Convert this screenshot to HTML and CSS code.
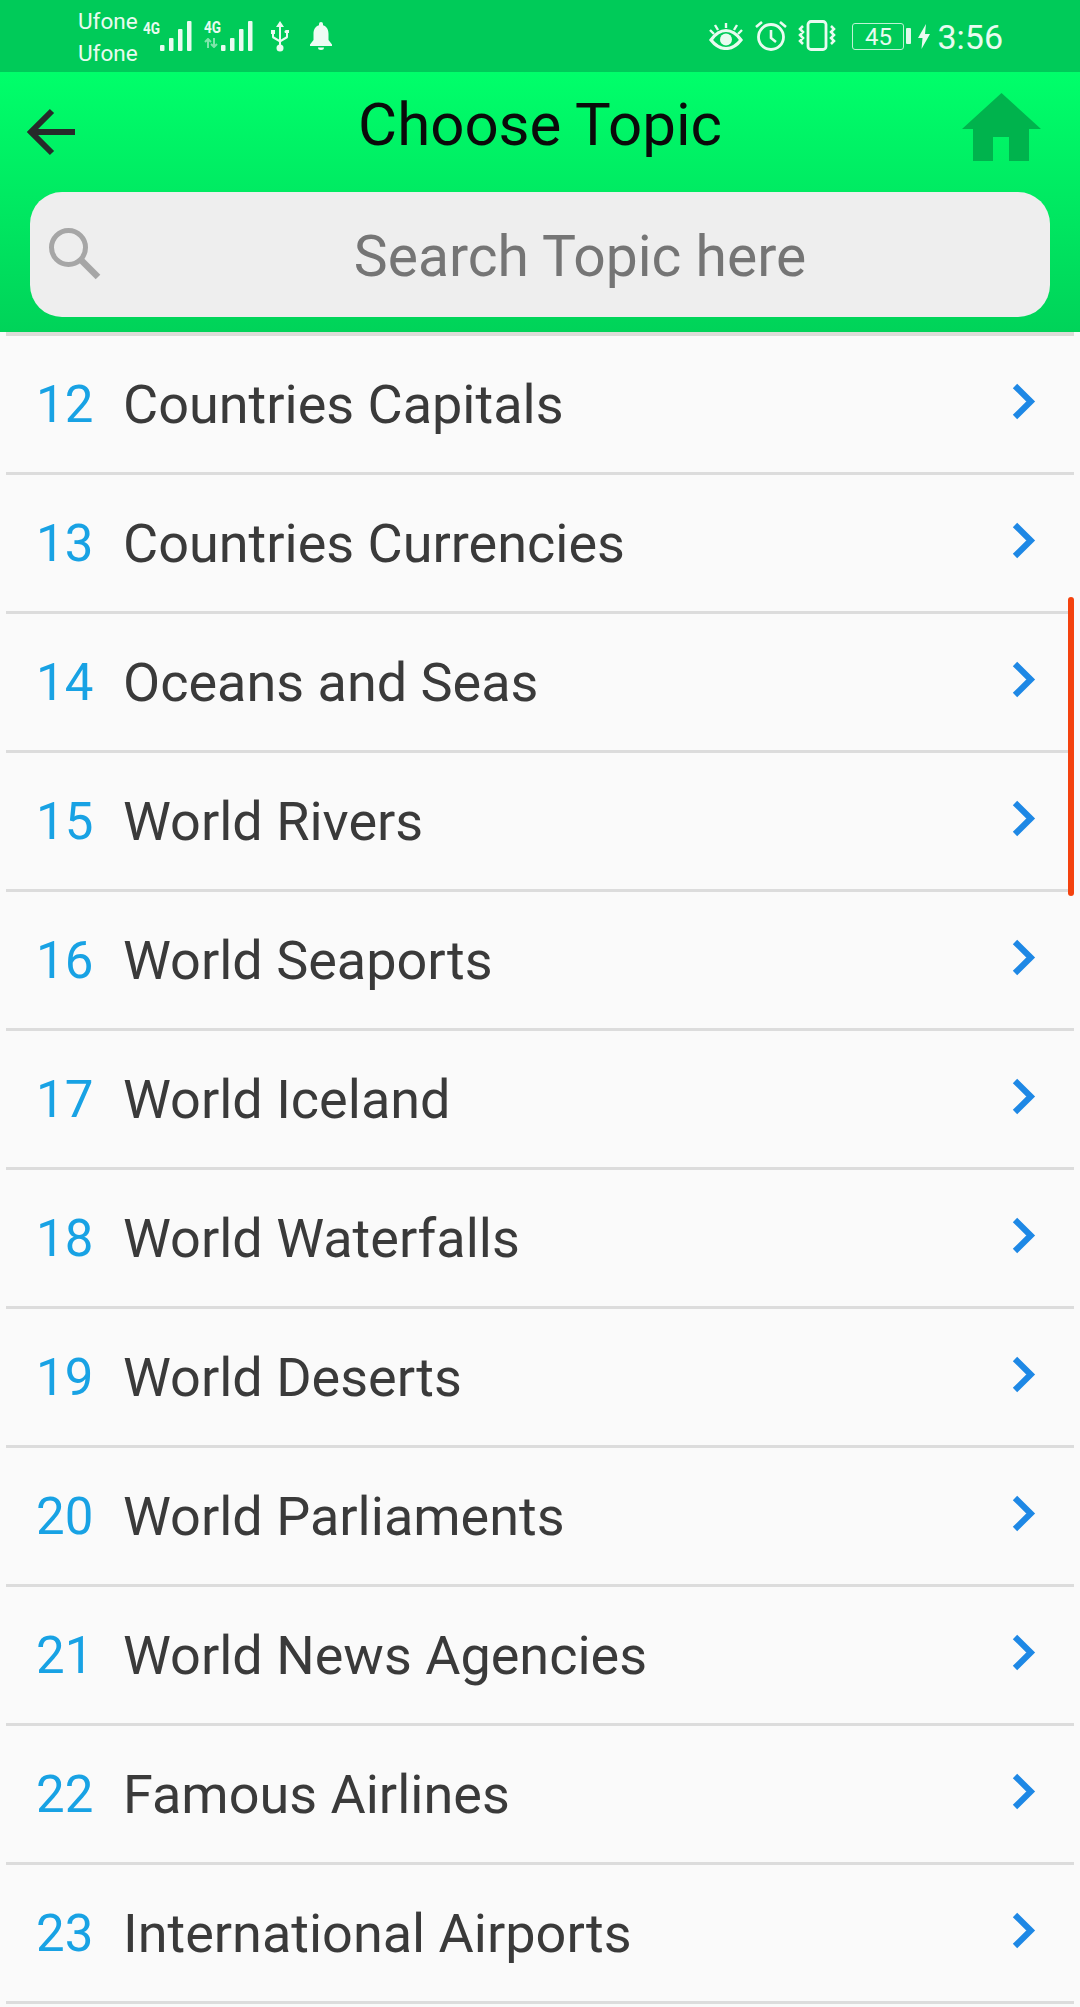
FILE: index.html
```html
<!DOCTYPE html>
<html lang="en">
<head>
<meta charset="utf-8">
<title>Choose Topic</title>
<link rel="stylesheet" href="styles.css">
</head>
<body>
<svg class="defs" width="0" height="0" aria-hidden="true">
  <defs>
    <symbol id="chev" viewBox="0 0 28 41">
      <path d="M5 5 L20.700 20.500 L5 36" fill="none" stroke="#1e88e5" stroke-width="6.200"/>
    </symbol>
    <symbol id="bars" viewBox="0 0 32 30">
      <rect x="0" y="24" width="4.500" height="6" rx="1"/>
      <rect x="9" y="17" width="4.500" height="13" rx="1"/>
      <rect x="18" y="8" width="4.500" height="22" rx="1"/>
      <rect x="27" y="0" width="4.500" height="30" rx="1"/>
    </symbol>
  </defs>
</svg>
<div class="phone">
  <div class="status">
    <div class="carriers"><span>Ufone</span><span>Ufone</span></div>
    <svg class="net-a" width="24" height="20" viewBox="0 0 24 20"><text class="net-label" x="0" y="16" textLength="17" lengthAdjust="spacingAndGlyphs">4G</text></svg>
    <svg class="bars-a" width="32" height="30"><use href="#bars"/></svg>
    <div class="net-b">
      <svg class="net-b-label" width="24" height="20" viewBox="0 0 24 20"><text class="net-label" x="0" y="16" textLength="17" lengthAdjust="spacingAndGlyphs">4G</text></svg>
      <svg class="arrows" width="15" height="10" viewBox="0 0 15 10"><path d="M4 10V1M1 4l3-3 3 3M10 0v9M7 6l3 3 3-3" fill="none" stroke="#7fe5aa" stroke-width="2"/></svg>
    </div>
    <svg class="bars-b" width="32" height="30"><use href="#bars"/></svg>
    <svg class="usb" width="22" height="32" viewBox="0 0 22 32">
      <path d="M11 1l4 6h-3v19h-2V7H7zM2 10h4v4H5v2.500l5 3V22l-6-3.500A2 2 0 0 1 3 17v-3H2zM20 10v3h-1v4a2 2 0 0 1-1 1.500l-6 3.500v-2.500l5-3V13h-1a2 2 0 0 1 1-3z" fill="#e9fbf0"/>
      <circle cx="11" cy="28" r="3.500" fill="#e9fbf0"/>
    </svg>
    <svg class="bell" width="22" height="28" viewBox="0 0 22 28">
      <path d="M11 0a2 2 0 0 1 2 2v1.300C17 4.500 18.500 8 18.500 12v6L22 22.500V24H0v-1.500L3.500 18v-6C3.500 8 5 4.500 9 3.300V2a2 2 0 0 1 2-2zM8 25.500h6a3 2.500 0 0 1-6 0z" fill="#eefcf4"/>
    </svg>
    <div class="status-right">
      <svg class="eye" width="34" height="28" viewBox="0 0 34 28">
        <path d="M2 18C7 11 12 8.500 17 8.500S27 11 32 18C27 24.500 22 26.500 17 26.500S7 24.500 2 18z" fill="none" stroke="#e9fbf0" stroke-width="3.200"/>
        <circle cx="17" cy="17.500" r="6" fill="#e9fbf0"/>
        <path d="M17 1v5M6 3l3 5M28 3l-3 5M1 8l4 4M33 8l-4 4" stroke="#e9fbf0" stroke-width="2.400" fill="none"/>
      </svg>
      <svg class="alarm" width="32" height="31" viewBox="0 0 32 31">
        <circle cx="16" cy="17" r="12.500" fill="none" stroke="#e9fbf0" stroke-width="2.800"/>
        <path d="M16 10v8l5 4M1 7l6-5M31 7l-6-5" fill="none" stroke="#e9fbf0" stroke-width="2.600"/>
      </svg>
      <svg class="vibrate" width="40" height="31" viewBox="0 0 40 31">
        <rect x="11" y="1.500" width="18" height="28" rx="3" fill="none" stroke="#e9fbf0" stroke-width="2.800"/>
        <path d="M6 6l-3 3 3 3-3 3 3 3-3 3 3 3M34 6l3 3-3 3 3 3-3 3 3 3-3 3" fill="none" stroke="#e9fbf0" stroke-width="2.500"/>
      </svg>
      <div class="battery"><span class="battery-level">45</span></div>
      <div class="battery-nub"></div>
      <svg class="bolt" width="12" height="25" viewBox="0 0 12 25"><path d="M8 0L0 14h4.500L3.500 25 12 10H7z" fill="#e9fbf0"/></svg>
      <span class="clock">3:56</span>
    </div>
  </div>

  <header class="appbar">
    <div class="toolbar">
      <svg class="back" width="48" height="48" viewBox="0 0 48 48">
        <path d="M25 3L4 24l21 21M4 24h44" fill="none" stroke="#262b2a" stroke-width="6"/>
      </svg>
      <h1 class="title">Choose Topic</h1>
      <svg class="home" width="80" height="68" viewBox="0 0 80 68">
        <path d="M39.500 0L79 36H67V68H47V44H31V68H11V36H0z" fill="#00b34d"/>
      </svg>
    </div>
    <div class="search">
      <svg class="search-icon" width="54" height="54" viewBox="0 0 54 54">
        <circle cx="20.500" cy="20.500" r="17" fill="none" stroke="#a6a6a6" stroke-width="5"/>
        <path d="M33 33L50 50" stroke="#a6a6a6" stroke-width="6.500"/>
      </svg>
      <span class="search-hint">Search Topic here</span>
    </div>
  </header>

  <ul class="topics">
    <li class="topic"><span class="num">12</span><span class="name">Countries Capitals</span><svg class="chev"><use href="#chev"/></svg></li>
    <li class="topic"><span class="num">13</span><span class="name">Countries Currencies</span><svg class="chev"><use href="#chev"/></svg></li>
    <li class="topic"><span class="num">14</span><span class="name">Oceans and Seas</span><svg class="chev"><use href="#chev"/></svg></li>
    <li class="topic"><span class="num">15</span><span class="name">World Rivers</span><svg class="chev"><use href="#chev"/></svg></li>
    <li class="topic"><span class="num">16</span><span class="name">World Seaports</span><svg class="chev"><use href="#chev"/></svg></li>
    <li class="topic"><span class="num">17</span><span class="name">World Iceland</span><svg class="chev"><use href="#chev"/></svg></li>
    <li class="topic"><span class="num">18</span><span class="name">World Waterfalls</span><svg class="chev"><use href="#chev"/></svg></li>
    <li class="topic"><span class="num">19</span><span class="name">World Deserts</span><svg class="chev"><use href="#chev"/></svg></li>
    <li class="topic"><span class="num">20</span><span class="name">World Parliaments</span><svg class="chev"><use href="#chev"/></svg></li>
    <li class="topic"><span class="num">21</span><span class="name">World News Agencies</span><svg class="chev"><use href="#chev"/></svg></li>
    <li class="topic"><span class="num">22</span><span class="name">Famous Airlines</span><svg class="chev"><use href="#chev"/></svg></li>
    <li class="topic"><span class="num">23</span><span class="name">International Airports</span><svg class="chev"><use href="#chev"/></svg></li>
  </ul>
  <div class="scroll-thumb"></div>
</div>
</body>
</html>
```

FILE: styles.css
```css
* { box-sizing: border-box; }

html, body {
  margin: 0;
  padding: 0;
  background: #fafafa;
}

body {
  font-family: Roboto, "Liberation Sans", sans-serif;
  overflow: hidden;
}

.defs { position: absolute; }

.phone {
  position: relative;
  width: 1080px;
  height: 2007px;
  overflow: hidden;
  background: #fafafa;
}

/* status bar */
.status {
  display: flex;
  align-items: flex-start;
  height: 72px;
  padding-left: 78px;
  background: #00cb59;
  color: #e9fbf0;
  fill: #e9fbf0;
}

.carriers {
  display: flex;
  flex-direction: column;
  gap: 8px;
  width: 65px;
  padding-top: 9px;
  font-size: 22.500px;
  line-height: 24px;
}

.net-label {
  font-family: Roboto, sans-serif;
  font-size: 17px;
  font-weight: 700;
  fill: #e9fbf0;
}

.net-a {
  margin: 18px -7px 0 0;
}

.bars-a { margin-top: 21px; }

.net-b {
  display: flex;
  flex-direction: column;
  width: 17px;
  margin: 17px 0 0 12px;
}

.net-b-label { margin-bottom: 1px; }
.arrows { display: block; }
.bars-b { margin-top: 21px; }
.usb { margin: 20px 0 0 16px; }
.bell { margin: 22px 0 0 19px; }

.status-right {
  display: flex;
  align-items: flex-start;
  margin-left: auto;
  padding-right: 77px;
}

.eye { margin-top: 22px; }
.alarm { margin: 20px 0 0 12px; }
.vibrate { margin: 20px 0 0 10px; }

.battery {
  display: flex;
  align-items: center;
  justify-content: center;
  width: 52px;
  height: 27px;
  margin: 23px 0 0 15px;
  border: 1.500px solid #bdf3d3;
  border-radius: 3px;
}

.battery-level {
  font-size: 24px;
  line-height: 1;
  color: #e9fbf0;
}

.battery-nub {
  width: 5px;
  height: 16px;
  margin: 28px 0 0 2px;
  border-radius: 1px;
  background: #dff9ea;
}

.bolt { margin: 24px 0 0 7px; }

.clock {
  margin: 17px 0 0 7px;
  font-size: 34px;
  line-height: 40px;
}

/* green app bar */
.appbar {
  height: 260px;
  padding: 0 30px;
  background: linear-gradient(#00ff6a, #00d359);
}

.toolbar {
  display: grid;
  grid-template-columns: 1fr auto 1fr;
  align-items: start;
  height: 120px;
  padding: 21px 8px 0 0;
}

.back {
  margin: 15px 0 0 -3px;
}

.title {
  margin: 0 -8px 0 0;
  font-size: 60px;
  font-weight: 400;
  line-height: 64px;
  color: #0a0a0a;
}

.home {
  justify-self: end;
}

.search {
  position: relative;
  display: flex;
  align-items: center;
  justify-content: center;
  height: 125px;
  padding-left: 80px;
  border-radius: 32px;
  background: #eeeeee;
}

.search-icon {
  position: absolute;
  left: 18px;
  top: 35px;
}

.search-hint {
  margin-top: 5px;
  font-size: 57px;
  line-height: 68px;
  color: #757575;
}

/* topic rows */
.topics {
  position: relative;
  margin: 0;
  padding: 0 6px;
  list-style: none;
  border-top: 4px solid transparent;
}

.topics::before {
  content: "";
  position: absolute;
  top: -4px;
  left: 6px;
  right: 6px;
  height: 4px;
  background: #dcdcd8;
}

.topic {
  display: flex;
  align-items: center;
  height: 139px;
  padding: 1px 0 0 30px;
  border-bottom: 3px solid #dcdcdc;
}

.num {
  width: 87px;
  font-size: 51px;
  color: #18a2e4;
}

.name {
  flex: 1;
  font-size: 54px;
  color: #3a3a3a;
}

.chev {
  width: 28px;
  height: 41px;
  margin: 0 36px 7px 0;
}

.scroll-thumb {
  position: absolute;
  left: 1068px;
  top: 597px;
  width: 6px;
  height: 299px;
  border-radius: 3px;
  background: #f4420e;
}
```
